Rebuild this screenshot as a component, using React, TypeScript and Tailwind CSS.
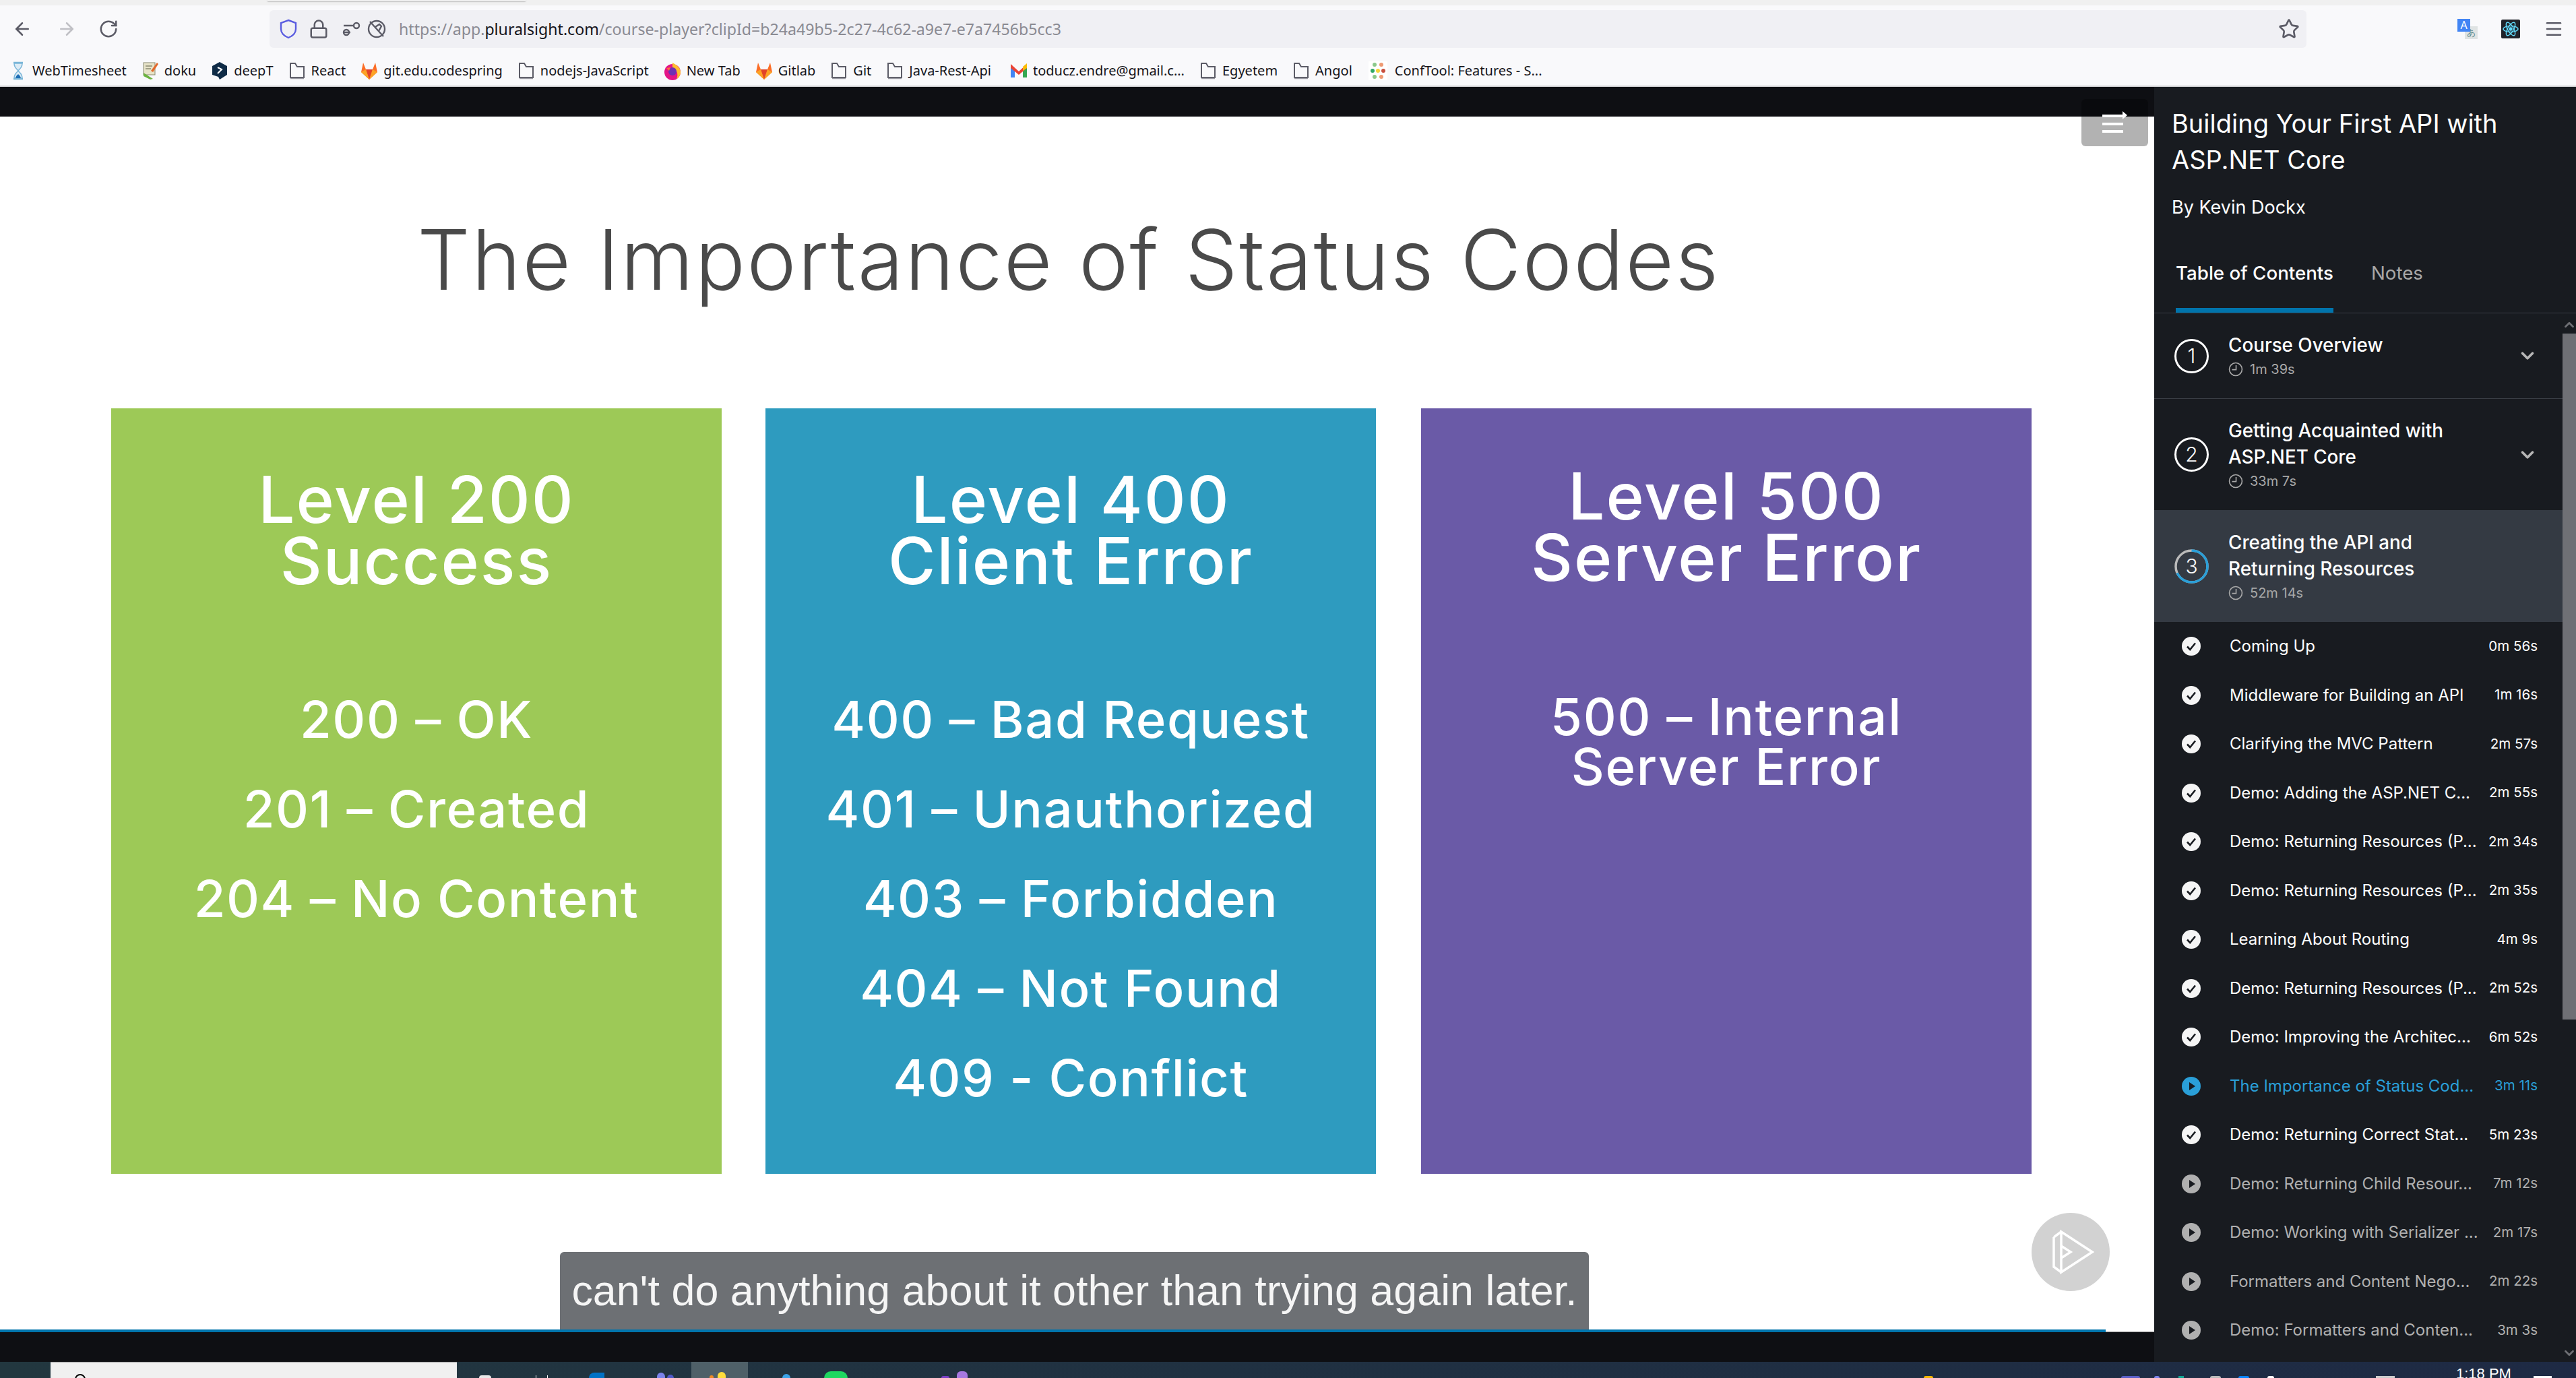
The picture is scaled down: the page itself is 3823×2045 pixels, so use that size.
import { ChevronDown, ChevronUp, RotateCw, ArrowLeft, ArrowRight, Star, Lock, Menu } from "lucide-react";
import type { ReactNode } from "react";

const sans = "font-['Inter','Liberation_Sans',sans-serif]";
const bar = "font-['Noto_Sans','Liberation_Sans',sans-serif]";

const Folder = (
    <svg width="26" height="28" viewBox="0 0 26 28" fill="none" stroke="#5b5b66" strokeWidth="2">
        <path d="M3 24V3H10L13 8H23V24Z" />
        <path d="M3 25.5H23" strokeWidth="1.5" stroke="#9a9aa2" />
    </svg>
);

const Fox = (
    <svg width="26" height="28" viewBox="0 0 26 28">
        <path d="M13 27L1 16L4 2L8 12H18L22 2L25 16Z" fill="#fc6d26" />
        <path d="M13 27L8 12H18Z" fill="#e24329" />
        <path d="M13 27L1 16L8 12Z" fill="#fca326" />
        <path d="M13 27L25 16L18 12Z" fill="#fca326" />
    </svg>
);

const bookmarks: { label: string; icon: ReactNode; extra?: string }[] = [
    {
        label: "WebTimesheet",
        icon: (
            <svg width="26" height="28" viewBox="0 0 26 28" fill="none">
                <path d="M6 2H20M6 26H20" stroke="#7ab6d8" strokeWidth="2.5" />
                <path d="M7 3C7 10 12 12 13 14C14 12 19 10 19 3ZM7 25C7 18 12 16 13 14C14 16 19 18 19 25Z" fill="#dcebf5" stroke="#7ab6d8" strokeWidth="1.5" />
                <path d="M9 25C10 21 12 20 13 19C14 20 16 21 17 25Z" fill="#1f6fb5" />
            </svg>
        ),
    },
    {
        label: "doku",
        icon: (
            <svg width="26" height="28" viewBox="0 0 26 28">
                <rect x="3" y="2" width="17" height="18" fill="#e7e3c8" stroke="#8a8a70" />
                <path d="M6 7H16M6 11H14" stroke="#8a8a70" strokeWidth="1.5" />
                <path d="M14 14L23 2L25 4L17 16Z" fill="#e2692b" />
                <path d="M3 17L17 26L13 27L3 22Z" fill="#6cb33f" />
            </svg>
        ),
    },
    {
        label: "deepT",
        icon: (
            <svg width="26" height="28" viewBox="0 0 26 28">
                <path d="M13 1L24 7V20L13 27L11 23L2 20V7Z" fill="#0f2b46" />
                <path d="M10 9L16 12L10 18" fill="none" stroke="#ffffff" strokeWidth="2" />
            </svg>
        ),
    },
    { label: "React", icon: Folder },
    { label: "git.edu.codespring", icon: Fox },
    { label: "nodejs-JavaScript", icon: Folder },
    {
        label: "New Tab",
        icon: (
            <svg width="26" height="28" viewBox="0 0 26 28">
                <circle cx="13" cy="16" r="12" fill="#e31587" />
                <path d="M13 2C20 6 25 10 25 16C25 20 23 24 19 26C22 20 20 12 13 10Z" fill="#ffbd2e" />
                <circle cx="13" cy="15" r="6" fill="#6e2fb5" />
                <path d="M4 10L10 9L8 14Z" fill="#ff7139" />
            </svg>
        ),
    },
    { label: "Gitlab", icon: Fox },
    { label: "Git", icon: Folder },
    { label: "Java-Rest-Api", icon: Folder },
    {
        label: "toducz.endre@gmail.c...",
        extra: "ml-[6px]",
        icon: (
            <svg width="26" height="28" viewBox="0 0 26 28">
                <path d="M1 6V24H7V12Z" fill="#4285f4" />
                <path d="M25 6V24H19V12Z" fill="#34a853" />
                <path d="M1 4L13 15L25 4V10L13 20L1 10Z" fill="#ea4335" />
                <path d="M19 8L25 3V10L19 14Z" fill="#fbbc04" />
            </svg>
        ),
    },
    { label: "Egyetem", icon: Folder },
    { label: "Angol", icon: Folder },
    {
        label: "ConfTool: Features - S...",
        extra: "ml-[2px] gap-[11px]",
        icon: (
            <svg width="28" height="28" viewBox="0 0 28 28">
                <rect width="28" height="28" fill="#ffffff" />
                <circle cx="9" cy="5" r="3" fill="#8bc98a" />
                <circle cx="19" cy="5" r="3" fill="#ee9a73" />
                <circle cx="6" cy="14" r="3" fill="#2fa866" />
                <circle cx="14" cy="14" r="3" fill="#f4d33b" />
                <circle cx="22" cy="14" r="3" fill="#c9503f" />
                <circle cx="9" cy="23" r="3" fill="#8bc98a" />
                <circle cx="19" cy="23" r="3" fill="#ee9a73" />
            </svg>
        ),
    },
];

const lessons = [
    { title: "Coming Up", time: "0m 56s", state: "done" },
    { title: "Middleware for Building an API", time: "1m 16s", state: "done" },
    { title: "Clarifying the MVC Pattern", time: "2m 57s", state: "done" },
    { title: "Demo: Adding the ASP.NET C...", time: "2m 55s", state: "done" },
    { title: "Demo: Returning Resources (P...", time: "2m 34s", state: "done" },
    { title: "Demo: Returning Resources (P...", time: "2m 35s", state: "done" },
    { title: "Learning About Routing", time: "4m 9s", state: "done" },
    { title: "Demo: Returning Resources (P...", time: "2m 52s", state: "done" },
    { title: "Demo: Improving the Architec...", time: "6m 52s", state: "done" },
    { title: "The Importance of Status Cod...", time: "3m 11s", state: "current" },
    { title: "Demo: Returning Correct Stat...", time: "5m 23s", state: "done" },
    { title: "Demo: Returning Child Resour...", time: "7m 12s", state: "todo" },
    { title: "Demo: Working with Serializer ...", time: "2m 17s", state: "todo" },
    { title: "Formatters and Content Nego...", time: "2m 22s", state: "todo" },
    { title: "Demo: Formatters and Conten...", time: "3m 3s", state: "todo" },
];

const panels = [
    { bg: "bg-[#9dc957]", heading: ["Level 200", "Success"], items: ["200 – OK", "201 – Created", "204 – No Content"], box: "mr-[65px] pt-[90px]" },
    { bg: "bg-[#2e9bbf]", heading: ["Level 400", "Client Error"], items: ["400 – Bad Request", "401 – Unauthorized", "403 – Forbidden", "404 – Not Found", "409 - Conflict"], box: "mr-[67px] pt-[90px]" },
    { bg: "bg-[#6a5aa7]", heading: ["Level 500", "Server Error"], items: [], box: "pt-[85px]" },
];

// tips of the taskbar icons, the rest is cut off by the window edge
const trayIcons = [
    "ml-[33px] mt-[20px] w-[18px] rounded-t-full bg-[#e8e8e8]",
    "ml-[66px] mt-[20px] w-[18px] border-x border-white",
    "ml-[61px] mt-[16px] w-[23px] rounded-tl-[10px] bg-[#0072c6]",
    "ml-[78px] mt-[16px] w-[12px] rounded-t-full bg-[#7b83eb]",
    "ml-[3px] mt-[19px] w-[10px] rounded-t-full bg-[#5059c9]",
];
const tray2 = [
    "ml-[51px] mt-[18px] w-[12px] rounded-t-full bg-[#3ba3e8]",
    "ml-[50px] mt-[14px] w-[35px] rounded-t-full bg-[#1ed760]",
    "ml-[139px] mt-[21px] w-[12px] rounded-t-full bg-[#7a3fc4]",
    "ml-[11px] mt-[14px] w-[16px] rounded-t-[6px] bg-[#a678e0]",
    "ml-[1419px] mt-[21px] w-[14px] rounded-t-full bg-[#f7b500]",
    "ml-[279px] mt-[21px] w-[28px] rounded-t-[4px] bg-[#5b5fc7]",
    "ml-[21px] mt-[21px] w-[8px] rounded-t-full bg-[#7b83eb]",
    "ml-[28px] mt-[21px] w-[8px] bg-[#12a594]",
    "ml-[39px] mt-[21px] w-[16px] rounded-t-full bg-[#bbbbbb]",
    "ml-[26px] mt-[21px] w-[16px] rounded-t-full bg-[#0a84ff]",
    "ml-[27px] mt-[21px] w-[10px] rounded-t-full bg-white",
    "ml-[151px] mt-[21px] w-[28px] bg-[#cccccc]",
];

function Clock() {
    return (
        <svg width="22" height="22" viewBox="0 0 20 20" fill="none" stroke="currentColor" strokeWidth="1.5">
            <circle cx="10" cy="10" r="8.6" />
            <path d="M10.5 4.5V10.5H5" />
        </svg>
    );
}

function LessonIcon({ state }: { state: string }) {
    const fill = state === "current" ? "#2a9fd8" : state === "todo" ? "#b0b0b0" : "#f5f5f5";
    return (
        <svg width="28" height="28" viewBox="0 0 28 28" className="shrink-0">
            <circle cx="14" cy="14" r="14" fill={fill} />
            {state === "done" ? (
                <path d="M8 14.5L12.2 19L20 9.5" fill="none" stroke="#181b20" strokeWidth="2.6" />
            ) : (
                <path d="M11 8L20 14L11 20Z" fill="#181b20" />
            )}
        </svg>
    );
}

function Section({ n, title, time, active }: { n: number; title: string[]; time: string; active?: boolean }) {
    return (
        <div className={`flex items-center pl-[30px] pr-[37px] ${title.length === 1 ? "h-[127px] border-b border-[#3a3e45]" : active ? "h-[166px] bg-[#343a43]" : "h-[165px]"}`}>
            <div className={`relative w-[51px] h-[51px] rounded-full shrink-0 flex items-center justify-center text-[30px] font-light text-white ${active ? "" : "border-[3.5px] border-white"}`}>
                {active && (
                    <svg width="51" height="51" viewBox="0 0 51 51" fill="none" strokeWidth="3.5" className="absolute inset-0 -rotate-90">
                        <circle cx="25.5" cy="25.5" r="23.5" stroke="#bbbbbb" />
                        <circle cx="25.5" cy="25.5" r="23.5" stroke="#2a9fd8" strokeDasharray="100 148" />
                    </svg>
                )}
                <span className="relative">{n}</span>
            </div>
            <div className="ml-[29px] flex-1 min-w-0">
                {title.map(line => (
                    <div key={line} className="text-[27.8px] leading-[39px] font-medium text-white whitespace-nowrap">{line}</div>
                ))}
                <div className="flex items-center gap-[10px] text-[#a8a8a8] text-[20px] leading-[30px] mt-[1px]">
                    <Clock />
                    {time}
                </div>
            </div>
            {!active && <ChevronDown size={30} strokeWidth={3} className="text-[#b5b5b5]" />}
        </div>
    );
}

export default function App() {
    return (
        <div className="h-screen w-full overflow-hidden flex flex-col bg-[#0e0f13]">
            <div className="h-[8px] bg-[#f0f0f0] shrink-0 pl-[397px]">
                <div className="w-[383px] h-[1px] bg-white shadow-[0_1px_2px_rgba(0,0,0,0.5)]" />
            </div>

            <div className={`h-[121px] shrink-0 bg-[#f9f9fb] border-b-2 border-[#cfcfd2] flex flex-col ${bar}`}>
                <div className="h-[63px] pt-[7px] flex items-start">
                    <div className="w-[400px] shrink-0 h-[56px] flex items-center pl-[18px] gap-[36px] text-[#5b5b66]">
                        <ArrowLeft size={30} strokeWidth={2} />
                        <ArrowRight size={30} strokeWidth={2} className="text-[#c0c0c5]" />
                        <RotateCw size={30} strokeWidth={2} className="-ml-[4px]" />
                    </div>
                    <div className="w-[3023px] h-[56px] rounded-[6px] bg-[#f0f0f4] flex items-center pl-[14px] pr-[10px]">
                        <svg width="28" height="30" viewBox="0 0 28 30" fill="none" stroke="#5a5ce0" strokeWidth="2.4" className="shrink-0">
                            <path d="M14 2L25 6V15C25 22 19 26 14 28C9 26 3 22 3 15V6Z" />
                        </svg>
                        <Lock size={30} strokeWidth={2} className="text-[#5b5b66] ml-[16px]" />
                        <svg width="28" height="30" viewBox="0 0 28 30" fill="none" stroke="#5b5b66" strokeWidth="2.4" className="ml-[20px]">
                            <path d="M2 10H16M2 20H12" />
                            <circle cx="21" cy="10" r="4" />
                            <circle cx="6" cy="20" r="4" />
                        </svg>
                        <svg width="30" height="30" viewBox="0 0 30 30" fill="none" stroke="#5b5b66" strokeWidth="2.4" className="ml-[8px]">
                            <circle cx="15" cy="15" r="12" />
                            <path d="M5 4L25 26M13 12L19 8L22 11L18 18" />
                        </svg>
                        <div className="ml-[18px] text-[23.15px] text-[#8a8a92] whitespace-nowrap">
                            https://app.<span className="text-[#15141a]">pluralsight.com</span>/course-player?clipId=b24a49b5-2c27-4c62-a9e7-e7a7456b5cc3
                        </div>
                        <Star size={32} strokeWidth={2} className="ml-auto text-[#5b5b66]" />
                    </div>
                    <div className="flex-1 h-[56px] flex items-center justify-end pr-[18px] gap-[35px]">
                        <div className="relative w-[30px] h-[30px]">
                            <div className="absolute right-0 bottom-0 w-[19px] h-[19px] bg-[#dfe3e3] text-[#5f8a8b] text-[13px] leading-[19px] text-center">あ</div>
                            <div className="absolute left-0 top-0 w-[19px] h-[19px] bg-[#4285f4] text-white text-[16px] leading-[19px] text-center">A</div>
                        </div>
                        <div className="w-[28px] h-[28px] bg-[#20232a] rounded-[2px] flex items-center justify-center">
                            <svg width="24" height="24" viewBox="0 0 24 24" fill="none" stroke="#61dafb" strokeWidth="1.4">
                                <circle cx="12" cy="12" r="2" fill="#61dafb" />
                                <ellipse cx="12" cy="12" rx="11" ry="4.4" />
                                <ellipse cx="12" cy="12" rx="11" ry="4.4" transform="rotate(60 12 12)" />
                                <ellipse cx="12" cy="12" rx="11" ry="4.4" transform="rotate(120 12 12)" />
                            </svg>
                        </div>
                        <Menu size={30} strokeWidth={2} className="text-[#5b5b66]" />
                    </div>
                </div>
                <div className="flex-1 flex items-center pt-[12px] pl-[14px] gap-[22px] text-[20px] text-[#15141a]">
                    {bookmarks.map(b => (
                        <div key={b.label} className={`flex items-center gap-[8px] whitespace-nowrap ${b.extra ?? ""}`}>
                            {b.icon}
                            {b.label}
                        </div>
                    ))}
                </div>
            </div>

            <div className="flex-1 min-h-0 flex">
                <div className="relative flex-1 min-w-0 flex flex-col">
                    <div className="h-[44px] shrink-0 bg-[#0e0f13]" />
                    <div className={`relative flex-1 min-h-0 bg-white flex flex-col ${sans}`}>
                        <h1 className="pl-[619px] pt-[127px] text-[124px] leading-[170px] font-light tracking-[2.2px] text-[#4a4a4a] whitespace-nowrap blur-[0.4px]">The Importance of Status Codes</h1>
                        <div className="flex pl-[165px] pt-[136px]">
                            {panels.map(p => (
                                <div key={p.heading[0]} className={`w-[906px] h-[1136px] shrink-0 ${p.bg} ${p.box} text-center text-white`}>
                                    <div className="text-[96px] leading-[91px] font-medium tracking-[2px] blur-[0.6px]">
                                        {p.heading.map(line => <div key={line}>{line}</div>)}
                                    </div>
                                    {p.items.length > 0 ? (
                                        <div className="mt-[123px] text-[76px] leading-[133px] font-medium tracking-[1.5px] blur-[0.6px]">
                                            {p.items.map(item => <div key={item}>{item}</div>)}
                                        </div>
                                    ) : (
                                        <div className="mt-[153px] text-[76px] leading-[74px] font-medium tracking-[1.7px] blur-[0.6px]">
                                            <div>500 – Internal</div>
                                            <div>Server Error</div>
                                        </div>
                                    )}
                                </div>
                            ))}
                        </div>
                        <div className="absolute left-[831px] bottom-[4px] h-[115px] w-[1527px] bg-[#6d7074] rounded-t-[6px] flex items-center justify-center font-['Liberation_Sans',sans-serif] text-[62.8px] text-[#f5f5f5] whitespace-nowrap">
                            can't do anything about it other than trying again later.
                        </div>
                        <div className="absolute left-[3015px] bottom-[61px] w-[116px] h-[116px] rounded-full bg-[#d2d2d2] flex items-center justify-center">
                            <svg width="70" height="70" viewBox="0 0 70 70" fill="none" stroke="white" strokeWidth="3.5">
                                <path d="M21 5L67 35L21 65Z" />
                                <path d="M21 26L35 35L21 44" />
                                <path d="M10 13V57L21 65M10 13L21 5" />
                            </svg>
                        </div>
                        <div className="absolute left-0 right-[72px] bottom-0 h-[4px] bg-[#0074ac]" />
                        <div className="absolute right-0 bottom-0 w-[72px] h-[1px] bg-[#999999]" />
                    </div>
                    <div className="h-[44px] shrink-0 bg-[#0e0f13]" />
                    <div className="absolute left-[3089px] top-[18px] w-[99px] h-[70px] rounded-[6px] bg-black/30">
                        <svg width="40" height="32" viewBox="0 0 40 32" className="ml-[31px] mt-[18px]" fill="none" stroke="white" strokeWidth="4">
                            <path d="M0 7H31M0 19H31M0 30H31" />
                            <path d="M30 0L37 6L30 12Z" fill="white" stroke="none" />
                        </svg>
                    </div>
                </div>

                <aside className={`relative w-[626px] shrink-0 bg-[#181b20] flex flex-col ${sans}`}>
                    <div className="h-[336px] shrink-0 border-b border-[#3a3e45] flex flex-col">
                        <div className="pl-[26px] pt-[27px] text-[38px] leading-[54px] text-white">
                            <div>Building Your First API with</div>
                            <div>ASP.NET Core</div>
                        </div>
                        <div className="pl-[26px] mt-[26px] text-[27px] leading-[36px] text-white">By Kevin Dockx</div>
                        <div className="mt-auto flex pl-[32px] gap-[56px] text-[27.7px] font-medium">
                            <div className="border-b-[7px] border-[#0074ac] pb-[34px] text-white leading-[36px]">Table of Contents</div>
                            <div className="text-[#a8a8a8] font-normal leading-[36px]">Notes</div>
                        </div>
                    </div>
                    <div className="flex-1 min-h-0 overflow-hidden w-[606px]">
                        <Section n={1} title={["Course Overview"]} time="1m 39s" />
                        <Section n={2} title={["Getting Acquainted with", "ASP.NET Core"]} time="33m 7s" />
                        <Section n={3} title={["Creating the API and", "Returning Resources"]} time="52m 14s" active />
                        {lessons.map((l, i) => (
                            <div key={i} className={`h-[72.5px] flex items-center pl-[41px] pr-[37px] text-[24px] ${l.state === "current" ? "text-[#2a9fd8]" : l.state === "todo" ? "text-[#b0b0b0]" : "text-white"}`}>
                                <LessonIcon state={l.state} />
                                <div className="ml-[43px] flex-1 min-w-0 whitespace-nowrap overflow-hidden">{l.title}</div>
                                <div className="text-[20.5px] whitespace-nowrap">{l.time}</div>
                            </div>
                        ))}
                    </div>
                    <div className="absolute right-0 top-[336px] bottom-0 w-[20px] flex flex-col items-center text-[#6f7075]">
                        <ChevronUp size={22} strokeWidth={3} className="mt-[4px] h-[26px] shrink-0" />
                        <div className="h-[1018px] w-full bg-[#6f7075]" />
                        <ChevronDown size={22} strokeWidth={3} className="mt-auto mb-[2px] shrink-0" />
                    </div>
                </aside>
            </div>

            <div className="h-[24px] shrink-0 bg-gradient-to-r from-[#22373f] to-[#1e2a44] overflow-hidden flex items-stretch">
                <div className="ml-[75px] w-[603px] shrink-0 bg-[#f0f0f0] border-t-2 border-[#c8c8c8] pl-[36px] pt-[16px]">
                    <div className="w-[16px] h-[16px] rounded-full border-2 border-black" />
                </div>
                {trayIcons.map(c => <div key={c} className={`${c} shrink-0`} />)}
                <div className="ml-[26px] w-[84px] shrink-0 bg-[#4f6068] flex items-stretch">
                    <div className="ml-[27px] mt-[20px] w-[6px] rounded-t-full bg-[#f08a24]" />
                    <div className="ml-[6px] mt-[15px] w-[12px] rounded-t-full bg-[#ffdd3c]" />
                </div>
                {tray2.map(c => <div key={c} className={`${c} shrink-0`} />)}
                <div className="ml-[91px] w-[73px] shrink-0 mt-[6px] text-[22px] leading-[24px] text-white whitespace-nowrap font-['Liberation_Sans',sans-serif]">1:18 PM</div>
                <div className="ml-[42px] mt-[21px] w-[27px] shrink-0 border-2 border-white" />
            </div>
        </div>
    );
}
